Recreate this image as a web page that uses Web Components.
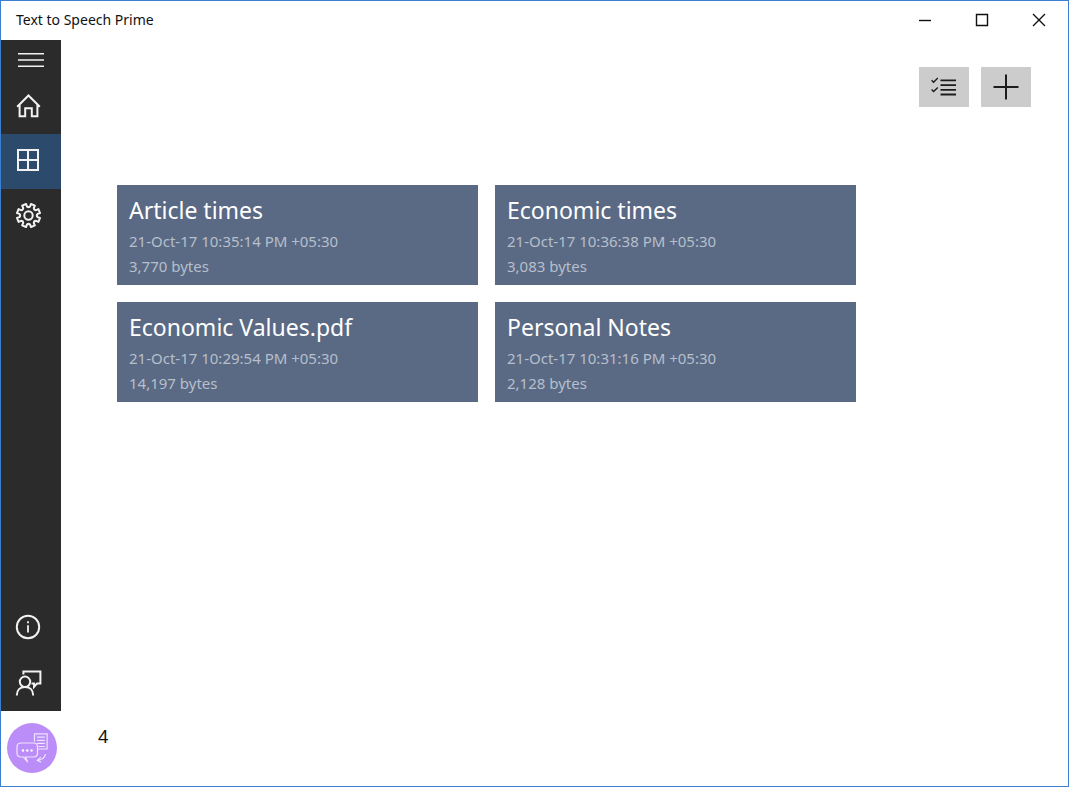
<!DOCTYPE html>
<html lang="en">
<head>
<meta charset="utf-8">
<meta name="viewport" content="width=device-width, initial-scale=1">
<title>Text to Speech Prime</title>
<style>
  html, body { margin: 0; height: 100%; }
  body { font-family: "Noto Sans", "Open Sans", sans-serif; color: #111; background: #fff; }
</style>
</head>
<body>
<tts-window>
  <title-bar slot="title">Text to Speech Prime</title-bar>
  <side-nav slot="nav"></side-nav>
  <action-bar slot="actions"></action-bar>
  <file-card name="Article times" date="21-Oct-17 10:35:14 PM +05:30" size="3,770 bytes"></file-card>
  <file-card name="Economic times" date="21-Oct-17 10:36:38 PM +05:30" size="3,083 bytes"></file-card>
  <file-card name="Economic Values.pdf" date="21-Oct-17 10:29:54 PM +05:30" size="14,197 bytes"></file-card>
  <file-card name="Personal Notes" date="21-Oct-17 10:31:16 PM +05:30" size="2,128 bytes"></file-card>
  <status-bar slot="status">4</status-bar>
</tts-window>

<script>
class BaseElement extends HTMLElement {
  constructor() {
    super();
    this.attachShadow({ mode: "open" }).innerHTML =
      "<style>*{box-sizing:border-box}:host{box-sizing:border-box;display:block}button{font:inherit;color:inherit;border:0;padding:0;margin:0;background:none;display:flex;align-items:center}svg{display:block;flex:none}</style>" +
      this.constructor.markup;
  }
}

class TtsWindow extends BaseElement {
  static markup = `
    <style>
      :host { display: flex; flex-direction: column; min-height: 100vh; border: 1px solid #3c7fd0; background: #fff; }
      .body { flex: 1; display: flex; }
      main { flex: 1; min-width: 0; padding: 27px 37px 27px 56px; }
      .grid { display: grid; grid-template-columns: repeat(auto-fill, minmax(0, 361px)); gap: 17px; margin-top: 78px; }
    </style>
    <slot name="title"></slot>
    <div class="body">
      <slot name="nav"></slot>
      <main>
        <slot name="actions"></slot>
        <div class="grid"><slot></slot></div>
      </main>
    </div>
    <slot name="status"></slot>`;
}
customElements.define("tts-window", TtsWindow);

class TitleBar extends BaseElement {
  static markup = `
    <style>
      :host { display: flex; justify-content: space-between; height: 39px; font-size: 14px; line-height: 20px; }
      .name { padding: 9px 15px; }
      .controls { display: flex; padding-right: 1px; }
      button { width: 57px; height: 38px; justify-content: center; }
      svg { fill: none; stroke: #111; stroke-width: 1.4; }
    </style>
    <span class="name"><slot></slot></span>
    <div class="controls">
      <button aria-label="Minimize"><svg width="14" height="14"><path d="M1 7.5h12"/></svg></button>
      <button aria-label="Maximize"><svg width="14" height="14"><path d="M1.5 1.5h11v11h-11z"/></svg></button>
      <button aria-label="Close"><svg width="14" height="14"><path d="M1 1l12 12M13 1L1 13"/></svg></button>
    </div>`;
}
customElements.define("title-bar", TitleBar);

/* Outline of the settings gear: eight blunt teeth around a ring. */
function gearPath(cx, cy, outer, inner) {
  let d = "";
  const at = (a, r) => (cx + r * Math.cos(a)).toFixed(2) + " " + (cy + r * Math.sin(a)).toFixed(2);
  for (let i = 0; i < 8; i++) {
    const mid = i * Math.PI / 4 + Math.PI / 8;
    d += (d ? "L" : "M") + at(mid - 0.22, inner) + "L" + at(mid - 0.18, outer) +
         "L" + at(mid + 0.18, outer) + "L" + at(mid + 0.22, inner) +
         "Q" + at(mid + Math.PI / 8, inner - 1.6) + " " + at(mid + Math.PI / 4 - 0.22, inner);
  }
  return d + "Z";
}

class SideNav extends BaseElement {
  static markup = `
    <style>
      :host { flex: none; width: 60px; background: #2b2b2b; }
      nav { height: 100%; display: flex; flex-direction: column; }
      button { width: 100%; height: 55px; padding: 0 0 4px 14px; }
      .menu { height: 39px; padding: 1px 0 0 17px; }
      .current { background: #2b4a6c; }
      .end { margin-top: auto; }
      svg { fill: none; stroke: #f2f2f2; stroke-width: 2; }
    </style>
    <nav aria-label="Main">
      <button class="menu" aria-label="Menu"><svg width="26" height="16" style="stroke-width:1.5"><path d="M0 1.7h26M0 8h26M0 14.3h26"/></svg></button>
      <button aria-label="Home"><svg width="27" height="26"><path d="M2.2 14.8L13.5 3.5l11.3 11.3M4.6 12.8v11.4h5.6v-8h6.6v8h5.6V12.8"/></svg></button>
      <button class="current" aria-label="Library" aria-current="page"><svg width="26" height="26"><path d="M3 3h20v20H3zM13 3v20M3 13h20"/></svg></button>
      <button aria-label="Settings"><svg width="28" height="28"><path d="${gearPath(13.5, 14.5, 11.8, 9.2)}" stroke-linejoin="round"/><circle cx="13.5" cy="14.5" r="4.2"/></svg></button>
      <button class="end" aria-label="About"><svg width="26" height="26"><circle cx="13" cy="13" r="11.2"/><path stroke-width="1.8" d="M13 11.2v7.3M13 7.3v2"/></svg></button>
      <button aria-label="Feedback"><svg width="28" height="28"><path d="M8.4 6.6V3.6h17v12H22l-3 3.3v-3.3h-2.5M1.8 27.4c0-5.2 3.3-8.3 8.2-8.3s8.2 3.1 8.2 8.3"/><circle cx="10" cy="13.8" r="5.2"/></svg></button>
    </nav>`;
}
customElements.define("side-nav", SideNav);

class ActionBar extends BaseElement {
  static markup = `
    <style>
      :host { display: flex; justify-content: flex-end; gap: 12px; }
      button { width: 50px; height: 40px; justify-content: center; background: #ccc; }
      svg { fill: none; stroke: #1c1c1c; }
    </style>
    <button aria-label="Select"><svg width="26" height="20"><path stroke-width="1.8" d="M9.5 3.4H25M9.5 8.1H25M9.5 12.8H25M9.5 17.5H25"/><path stroke-width="1.4" d="M.6 3.2l2 2L6.8 1M.6 12.6l2 2 4.2-4.2"/></svg></button>
    <button aria-label="Add"><svg width="26" height="26"><path stroke-width="2" d="M13 .5v25M.5 13h25"/></svg></button>`;
}
customElements.define("action-bar", ActionBar);

class FileCard extends BaseElement {
  static markup = `
    <style>
      :host { height: 100px; padding: 9px 12px; background: #5a6a84; color: #b6bfcb; font-size: 15px; line-height: 25px; white-space: nowrap; overflow: hidden; }
      h2 { margin: 0 0 2px; font-size: 23px; line-height: 33px; font-weight: 400; color: #fff; }
      p { margin: 0; }
    </style>
    <h2></h2><p class="date"></p><p class="size"></p>`;
  connectedCallback() {
    this.shadowRoot.querySelector("h2").textContent = this.getAttribute("name");
    this.shadowRoot.querySelector(".date").textContent = this.getAttribute("date");
    this.shadowRoot.querySelector(".size").textContent = this.getAttribute("size");
  }
}
customElements.define("file-card", FileCard);

class StatusBar extends BaseElement {
  static markup = `
    <style>
      :host { display: flex; gap: 41px; height: 75px; padding: 12px 6px; font-size: 18px; line-height: 26px; }
      button { width: 50px; height: 50px; border-radius: 50%; background: #bb8df8; }
      svg { fill: none; stroke: #f0e4ff; stroke-width: 1.2; }
    </style>
    <button aria-label="Text to Speech Prime"><svg width="50" height="50">
      <path d="M27.5 18.5v-7.7h12.6v15.2h-9M30 14.2h7.8M30 17.3h7.8M30 20.4h7.8M31.5 23.5h6.3"/>
      <path d="M14 20h12.5q4 0 4 4v6q0 4-4 4H18.5l2.2 5-4.2-5H14q-4 0-4-4v-6q0-4 4-4z"/>
      <path d="M38.5 31q-1.2 5.7-7.7 6.3M34 34.1l-3.7 3.2 3.9 2"/>
      <g fill="#fff" stroke="none"><circle cx="16" cy="27.5" r="1.2"/><circle cx="20.3" cy="27.5" r="1.2"/><circle cx="24.6" cy="27.5" r="1.2"/></g>
    </svg></button>
    <span><slot></slot></span>`;
}
customElements.define("status-bar", StatusBar);
</script>
</body>
</html>
